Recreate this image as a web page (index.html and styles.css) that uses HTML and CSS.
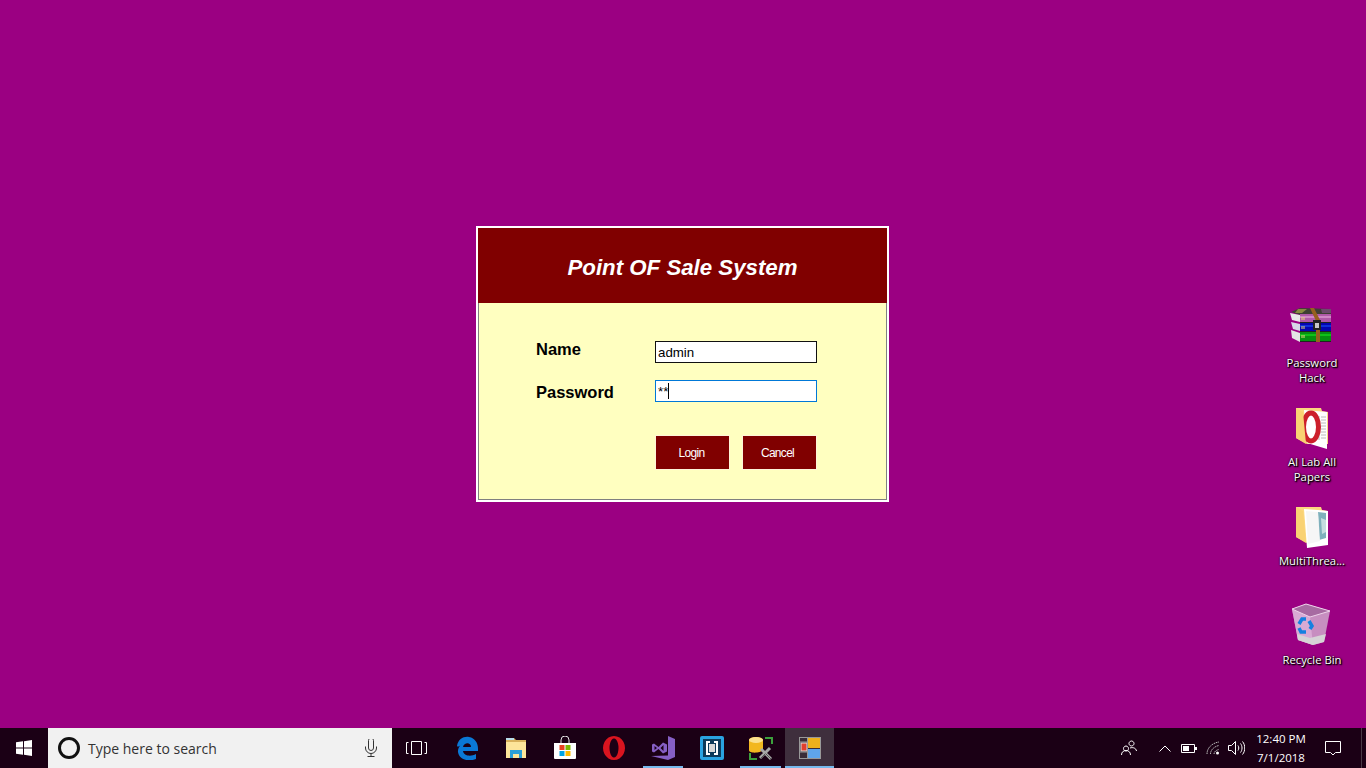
FILE: index.html
```html
<!DOCTYPE html>
<html lang="en">
<head>
<meta charset="utf-8">
<title>Point OF Sale System</title>
<link rel="stylesheet" href="styles.css">
</head>
<body>
<main class="desktop">
  <section class="dialog">
    <header class="dialog-head"><h1 class="dialog-title">Point OF Sale System</h1></header>
    <form class="dialog-body">
      <label class="lbl lbl-name" for="n">Name</label>
      <input class="field" id="n" value="admin">
      <label class="lbl lbl-pass" for="p">Password</label>
      <div class="field-wrap"><input class="field field-focus" id="p" value="**"><span class="caret"></span></div>
      <div class="actions">
        <button class="btn btn-login" type="button">Login</button>
        <button class="btn btn-cancel" type="button">Cancel</button>
      </div>
    </form>
  </section>

  <div class="icons">
    <div class="dicon">
      <svg class="dicon-img" viewBox="0 0 54 50">
        <polygon points="6,12 15,8 46,9 46,14 15,15" fill="#3f3f34"/>
        <polygon points="13,9 22,9 17,13 10,13" fill="#8a8a40"/>
        <polygon points="36,9 46,9 46,13 37,13" fill="#6d4a6c"/>
        <polygon points="5,13 15,15 15,22 7,20" fill="#e8e8e8"/>
        <polygon points="6,22 15,24 15,31 8,29" fill="#d8d8e8"/>
        <polygon points="6,30 15,33 15,42 7,38" fill="#e4e4e4"/>
        <rect x="15" y="14" width="31" height="8" fill="#b05aa8"/>
        <rect x="15" y="16" width="31" height="2" fill="#d088c6"/>
        <rect x="15" y="23" width="31" height="8" fill="#0505b0"/>
        <rect x="15" y="25" width="31" height="2" fill="#1030d8"/>
        <rect x="15" y="32" width="31" height="9" fill="#069010"/>
        <rect x="15" y="34" width="31" height="2" fill="#10c018"/>
        <path d="M17 17v3M19 17v3M17 26v3M19 26v3M17 35v3M19 35v3" stroke="#e8d878" stroke-width="1" fill="none"/>
        <path d="M15 22.500H46M15 31.500H46M15 41.500H46" stroke="#222" stroke-width="1" fill="none"/>
        <polygon points="25,8 29,8 35,20 35,42 31,42 31,21" fill="#96601e"/>
        <rect x="28" y="20" width="8" height="10" fill="#222"/>
        <rect x="30" y="23" width="4" height="5" fill="#c8c8c8"/>
      </svg>
      <span class="dicon-label">Password Hack</span>
    </div>
    <div class="dicon">
      <svg class="dicon-img" viewBox="0 0 54 50">
        <polygon points="11,9 36,9 37,12 43,13 43,45 22,45 11,39" fill="#fbd87f"/>
        <polygon points="19,11 42,13 42,50 22,44" fill="#fff"/>
        <path d="M34 17v24M36 18h5M36 21h5M36 24h5M36 27h5M36 30h5M36 33h5M36 36h5M36 39h5" stroke="#bcbcbc" stroke-width="1" fill="none"/>
        <ellipse cx="26" cy="28" rx="7.500" ry="14" fill="none" stroke="#cc1f2b" stroke-width="5"/>
        <polygon points="11,9 18,13 21,45 11,39" fill="#f9d273"/>
      </svg>
      <span class="dicon-label">AI Lab All Papers</span>
    </div>
    <div class="dicon">
      <svg class="dicon-img" viewBox="0 0 54 50">
        <polygon points="11,9 36,9 37,12 43,13 43,45 22,45 11,39" fill="#fbd87f"/>
        <polygon points="19,11 33,12 43,13 43,47 22,50" fill="#fff"/>
        <polygon points="33,14 41,15 41,40 34,42" fill="#7fb0bc"/>
        <polygon points="36,20 41,22 41,34 37,36" fill="#c5dde0"/>
        <polygon points="21,13 33,14 35,43 23,46" fill="#f6f6f6"/>
        <polygon points="11,9 18,13 21,45 11,39" fill="#f9d273"/>
      </svg>
      <span class="dicon-label">MultiThrea...</span>
    </div>
    <div class="dicon">
      <svg class="dicon-img" viewBox="0 0 54 50">
        <polygon points="7,12 21,7 45,14 39,45 28,48 13,43" fill="#c78ec0"/>
        <polygon points="7,12 25,20 28,48 13,43" fill="#d9aad4"/>
        <polygon points="7,12 21,7 45,14 25,20" fill="#a76ba2" stroke="#eed2ea" stroke-width="1"/>
        <polygon points="12,37 25,41 41,37 39,45 28,48 13,43" fill="#d6d3d6"/>
        <path d="M14 27l3-5 4 0M24 24l3 5-2 3M21 35h-5l-2-4" stroke="#1580e0" stroke-width="3.500" fill="none"/>
      </svg>
      <span class="dicon-label">Recycle Bin</span>
    </div>
  </div>
</main>

<footer class="taskbar">
  <button class="start" type="button" aria-label="Start">
    <svg class="ico16" viewBox="0 0 16 16"><path fill="#fff" d="M0 2.300 7 1.300V7.500H0ZM8 1.200 16 0V7.500H8ZM0 8.500H7V14.700L0 13.700ZM8 8.500H16V16L8 14.800Z"/></svg>
  </button>
  <div class="search">
    <svg class="cortana" viewBox="0 0 24 24"><circle cx="12" cy="12" r="9.500" fill="none" stroke="#111" stroke-width="3"/></svg>
    <span class="search-text">Type here to search</span>
    <svg class="mic" viewBox="0 0 14 18"><path d="M4.500 1.500a2.500 2.500 0 0 1 5 0V9a2.500 2.500 0 0 1-5 0ZM1.500 7.500V9a5.500 5.500 0 0 0 11 0V7.500M7 14.500V17M3.500 17.500h7" fill="none" stroke="#333" stroke-width="1"/></svg>
  </div>
  <button class="taskview" type="button" aria-label="Task view">
    <svg class="tv-ico" viewBox="0 0 21 14"><path d="M5.500 .5h10v13h-10ZM2.500 1.500H.5v11h2M18.500 1.500h2v11h-2" fill="none" stroke="#fff" stroke-width="1"/></svg>
  </button>
  <div class="apps">
    <div class="app">
      <svg class="ico" viewBox="0 0 24 24"><path fill="#0a78d6" d="M2 10C3 3 9 0 14 1c6 1 9 6 9 12v2H8c.5 5 8 6 13 3v5c-7 3-17 1-18-7-.3-3 1-6 4-8 0 0-4 4-5 2Zm6 1h8c0-5-7-5-8 0Z"/></svg>
    </div>
    <div class="app">
      <svg class="ico" viewBox="0 0 24 24">
        <path fill="#d9b25c" d="M2 2h8l2 2h10v3H2Z"/>
        <rect x="2" y="6" width="20" height="16" fill="#fde59a"/>
        <rect x="2" y="2" width="8" height="2" fill="#b8dcea"/>
        <path fill="#2a9fd8" d="M6 22v-8h12v8h-3v-4h-6v4Z"/>
      </svg>
    </div>
    <div class="app">
      <svg class="ico" viewBox="0 0 24 24">
        <path d="M8 7V4a4 4 0 0 1 8 0v3" fill="none" stroke="#e4e4e4" stroke-width="1"/>
        <path fill="#fff" d="M1 7h22v15a1 1 0 0 1-1 1H2a1 1 0 0 1-1-1Z"/>
        <rect x="6.500" y="9" width="5" height="5" fill="#e8401f"/>
        <rect x="12.500" y="9" width="5" height="5" fill="#7db700"/>
        <rect x="6.500" y="15" width="5" height="5" fill="#00a3e4"/>
        <rect x="12.500" y="15" width="5" height="5" fill="#fdb900"/>
      </svg>
    </div>
    <div class="app">
      <svg class="ico" viewBox="0 0 24 24"><path fill="#d9141f" fill-rule="evenodd" d="M12 0a11 12 0 1 0 .01 0ZM12 2.500a4.500 9.500 0 1 1-.01 0Z"/></svg>
    </div>
    <div class="app app-run">
      <svg class="ico" viewBox="0 0 24 24"><path fill="#865fc5" fill-rule="evenodd" d="M17 0l7 3v18l-7 3L0 20l17-.5ZM1 8.500 3 7.500 7.500 11 12 6.500l4 2v7l-4 2L7.500 13 3 16.500 1 15.500ZM3.500 10v4l2.500-2ZM9.500 12l3 3V9Z"/></svg>
    </div>
    <div class="app">
      <svg class="ico" viewBox="0 0 24 24">
        <rect width="24" height="24" rx="2" fill="#2aa3e2"/>
        <rect x="3" y="3" width="18" height="18" fill="#0d3a5a"/>
        <path d="M10 5H6v14h4v-2H8V7h2ZM14 5h4v14h-4v-2h2V7h-2Z" fill="#fff"/>
        <rect x="9" y="8" width="6" height="8" fill="#d8d8d8"/>
      </svg>
    </div>
    <div class="app app-run">
      <svg class="ico-lg" viewBox="0 0 28 28">
        <path d="M2 6c0-4 14-4 14 0v10c-2 3-14 4-14 0Z" fill="#f2b71f"/>
        <ellipse cx="9" cy="6" rx="7" ry="3" fill="#fbe08f"/>
        <path d="M18 4h7v6M3 19v6h7" fill="none" stroke="#3ca03c" stroke-width="2"/>
        <path d="M13 24l10-10M14 15l10 10" stroke="#a8a8a8" stroke-width="3" fill="none"/>
        <path d="M13.500 24.500l5-5M19 20l5 5" stroke="#555" stroke-width="1" fill="none"/>
      </svg>
    </div>
    <div class="app app-active">
      <svg class="ico-sm" viewBox="0 0 22 22">
        <rect x=".5" y=".5" width="21" height="21" fill="#3a2c38" stroke="#999"/>
        <rect x="9" y="1" width="12" height="10" fill="#eeb11c"/>
        <rect x="9" y="12" width="12" height="9" fill="#5fa4ea"/>
        <rect x="2" y="6" width="6" height="8" fill="#e0402e" stroke="#ddd" stroke-width="1"/>
        <path d="M0 5H9M0 15H9M8.500 0V22" stroke="#999" stroke-width="1"/>
      </svg>
    </div>
  </div>
  <div class="tray">
    <svg class="t-people" viewBox="0 0 16 16"><path d="M10.500 1a2.500 2.500 0 1 0 .01 0ZM5 6a2.500 2.500 0 1 0 .01 0ZM.5 15c0-3 2-4.500 4.500-4.500S9.500 12 9.500 15M9 8c3-1 6 0 6.500 3" fill="none" stroke="#fff" stroke-width="1"/></svg>
    <svg class="t-chev" viewBox="0 0 12 7"><path d="M.5 6.500 6 1l5.500 5.500" fill="none" stroke="#fff" stroke-width="1"/></svg>
    <svg class="t-bat" viewBox="0 0 16 9"><path d="M.5.500h13v8H.5Z" fill="none" stroke="#fff"/><rect x="2" y="2" width="6" height="5" fill="#fff"/><rect x="14" y="3" width="2" height="3" fill="#fff"/></svg>
    <svg class="t-wifi" viewBox="0 0 14 14"><path d="M1 13C1 7 6 2 13 1M4.500 13C4.500 9 8 5.500 13 4.500M8 13c0-2 2-4 5-4.500" fill="none" stroke="#bbb" stroke-width="1" stroke-dasharray="1.500 .7"/><circle cx="11.500" cy="12" r="1.500" fill="#fff"/></svg>
    <svg class="t-vol" viewBox="0 0 17 14"><path d="M.5 4.500h3l4-4v13l-4-4h-3ZM10 4.500c1 1.500 1 3.500 0 5M12.500 2.500c2 2.500 2 6.500 0 9M14.500.5c3 3.500 3 9.500 0 13" fill="none" stroke="#fff" stroke-width="1"/></svg>
    <div class="clock"><span>12:40 PM</span><span>7/1/2018</span></div>
    <svg class="t-note" viewBox="0 0 16 15"><path d="M.5.500h15v11h-5l-2.500 2.500-2.500-2.500h-5Z" fill="none" stroke="#fff" stroke-width="1"/></svg>
    <span class="show-desktop"></span>
  </div>
</footer>
</body>
</html>
```
FILE: styles.css
```css
* { box-sizing: border-box; }
html, body { margin: 0; height: 100%; }
body {
  width: 1366px;
  height: 768px;
  overflow: hidden;
  display: flex;
  flex-direction: column;
  background: #9b0082;
  font-family: "Liberation Sans", Arial, sans-serif;
}
.desktop { position: relative; flex: 1 1 auto; }

/* dialog window */
.dialog {
  position: absolute;
  left: 476px;
  top: 226px;
  width: 413px;
  height: 276px;
  border: 2px solid #fff;
  display: flex;
  flex-direction: column;
  background: #ffffc0;
}
.dialog-head {
  height: 75px;
  flex: none;
  background: #800000;
  display: flex;
  align-items: center;
  justify-content: center;
  padding: 4px 0 0 0;
}
.dialog-title {
  margin: 0;
  font-size: 22.250px;
  font-weight: bold;
  font-style: italic;
  color: #fff;
  line-height: 26px;
}
.dialog-body {
  flex: 1;
  border: 1px solid #808080;
  border-top: 0;
  padding: 38px 0 0 57px;
  display: grid;
  grid-template-columns: 119px 162px;
  grid-auto-rows: 22px;
  row-gap: 17px;
  align-content: start;
}
.lbl {
  font-size: 16.500px;
  font-weight: bold;
  color: #000;
  line-height: 20px;
}
.lbl-name { margin-top: -2px; }
.lbl-pass { margin-top: 2px; }
.field {
  display: block;
  width: 162px;
  height: 22px;
  margin: 0;
  padding: 1px 2px 0;
  border: 1px solid #111;
  border-radius: 0;
  outline: 0;
  background: #fff;
  font-family: "Liberation Sans", Arial, sans-serif;
  font-size: 13.300px;
  color: #000;
}
.field-wrap { position: relative; }
.field-focus { border-color: #0078d7; padding-top: 0; }
.caret {
  position: absolute;
  left: 13px;
  top: 3px;
  width: 1px;
  height: 16px;
  background: #000;
}
.actions {
  grid-column: 2;
  display: flex;
  gap: 12px;
  height: 35px;
  margin-top: 16px;
}
.btn {
  width: 75px;
  height: 35px;
  margin: 0;
  padding: 0;
  border: 1px solid #fff4d8;
  border-radius: 0;
  background: #800000;
  color: #fff;
  font-family: "Liberation Sans", Arial, sans-serif;
  font-size: 12px;
  letter-spacing: -0.7px;
}
.btn-login { padding-right: 2px; }
.btn-cancel { padding-right: 4px; }

/* desktop icons */
.icons {
  position: absolute;
  left: 1272px;
  top: 300px;
  width: 80px;
  display: flex;
  flex-direction: column;
}
.dicon {
  height: 99px;
  display: flex;
  flex-direction: column;
  align-items: center;
}
.dicon-img { width: 54px; height: 50px; flex: none; }
.dicon-label {
  margin-top: 5px;
  width: 72px;
  text-align: center;
  font-family: "Open Sans", sans-serif;
  font-size: 11.300px;
  line-height: 15px;
  color: #fff;
  text-shadow: 1px 1px 1px #000, 0 0 2px #000, 1px 1px 2px #000;
}

/* taskbar */
.taskbar {
  flex: none;
  height: 40px;
  background: #1b0015;
  display: flex;
  align-items: stretch;
  color: #fff;
}
.start {
  width: 48px;
  padding: 0;
  border: 0;
  background: transparent;
  display: flex;
  align-items: center;
  justify-content: center;
}
.ico16 { width: 16px; height: 16px; }
.search {
  width: 344px;
  background: #f1f1f1;
  display: flex;
  align-items: center;
  padding-left: 9px;
}
.cortana { width: 24px; height: 24px; flex: none; }
.search-text {
  margin-left: 7px;
  font-family: "Open Sans", sans-serif;
  font-size: 14px;
  color: #333;
}
.mic { width: 14px; height: 18px; margin-left: auto; margin-right: 14px; }
.taskview {
  width: 51px;
  padding: 0 3px 0 0;
  border: 0;
  background: transparent;
  display: flex;
  align-items: center;
  justify-content: center;
}
.tv-ico { width: 21px; height: 14px; }
.apps { display: flex; }
.app {
  width: 48.875px;
  display: flex;
  align-items: center;
  justify-content: center;
  position: relative;
}
.ico { width: 24px; height: 24px; }
.ico-sm { width: 22px; height: 22px; }
.ico-lg { width: 28px; height: 28px; }
.app-run::after {
  content: "";
  position: absolute;
  left: 4px;
  right: 4px;
  bottom: 0;
  height: 2px;
  background: #76b9ed;
}
.app-active { background: #3f2f3d; }
.app-active::after {
  content: "";
  position: absolute;
  left: 0;
  right: 0;
  bottom: 0;
  height: 2px;
  background: #76b9ed;
}
.tray {
  margin-left: auto;
  display: flex;
  align-items: center;
}
.t-people { width: 16px; height: 16px; margin-right: 22px; }
.t-chev { width: 12px; height: 7px; margin-right: 10px; }
.t-bat { width: 16px; height: 9px; margin-right: 9px; }
.t-wifi { width: 14px; height: 14px; margin-right: 8px; }
.t-vol { width: 17px; height: 14px; margin-right: 11px; }
.clock {
  width: 50px;
  display: flex;
  flex-direction: column;
  align-items: center;
  font-family: "Open Sans", sans-serif;
  font-size: 11.500px;
  line-height: 19px;
  color: #fff;
}
.t-note { width: 16px; height: 15px; margin-left: 19px; margin-right: 20px; }
.show-desktop {
  width: 1px;
  height: 40px;
  background: #4a3a46;
  margin-right: 4px;
}
```
